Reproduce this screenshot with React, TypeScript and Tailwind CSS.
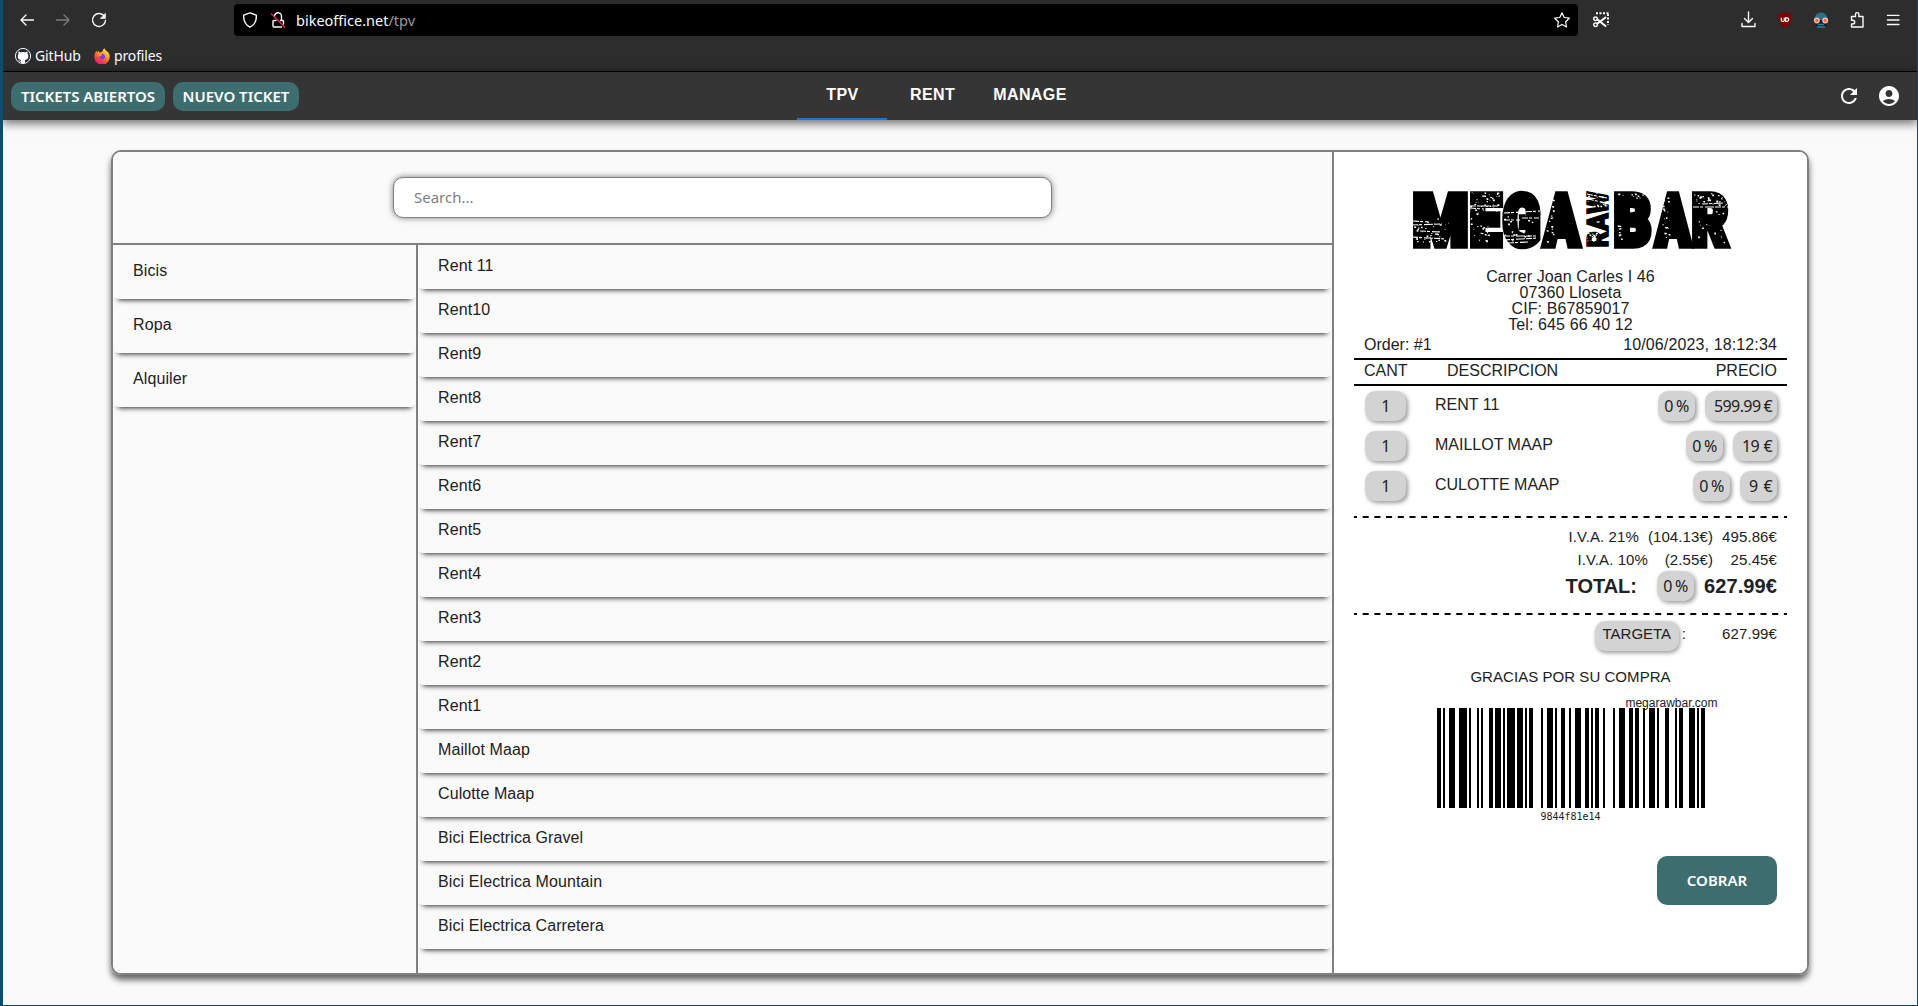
import React from "react";

const letters = [
  { c: "M", x: 0, w: 57 },
  { c: "E", x: 57, w: 33 },
  { c: "G", x: 90, w: 39 },
  { c: "A", x: 131, w: 37 },
  { c: "B", x: 201, w: 39 },
  { c: "A", x: 243, w: 36 },
  { c: "R", x: 279, w: 38 },
];

const scratches =
  "M1 30l16 1M0 34l30-1M8 40l20 1M0 46l34 2M58 15h29M58 17l14 1M92 22l36-2M92 29h16M110 27h17M92 45l34 0M92 49l34-2M96 52l20-1M175 3l20 4M176 8l18 4M281 16l36 0M290 13l22-1M174 40h9";

// Worn areas of the stamp: x, y, width, height, speck count
const worn = [
  [0, 26, 36, 26, 36],
  [57, 1, 31, 18, 40],
  [57, 20, 20, 30, 24],
  [92, 24, 34, 28, 18],
  [134, 6, 7, 48, 24],
  [175, 1, 21, 16, 18],
  [174, 38, 12, 18, 16],
  [205, 2, 26, 5, 9],
  [204, 34, 5, 16, 8],
  [250, 6, 7, 48, 24],
  [282, 2, 33, 12, 28],
  [284, 20, 32, 34, 16],
];

function specks() {
  let seed = 7;
  const rnd = () => (seed = (seed * 16807) % 2147483647) / 2147483647;
  let d = "";
  for (const [x, y, w, h, n] of worn) {
    for (let i = 0; i < n; i++) {
      const s = 0.6 + rnd() * 1.1;
      d += `M${(x + rnd() * w).toFixed(1)} ${(y + rnd() * h).toFixed(1)}h${(s * 1.3).toFixed(1)}v${s.toFixed(1)}h-${s.toFixed(1)}z`;
    }
  }
  return d;
}

function Logo() {
  return (
    <svg width="317" height="57" viewBox="0 0 317 57" className="block overflow-visible">
      <g fontFamily="Roboto" fontWeight="900" fontSize="70" fill="#000" stroke="#000" strokeWidth="7.500" strokeLinejoin="miter" strokeMiterlimit="2">
        {letters.map((l, i) => (
          <text key={i} x={l.x + 1} y="53.500" textLength={l.w - 2} lengthAdjust="spacingAndGlyphs">{l.c}</text>
        ))}
        <text transform="translate(196 56.500) rotate(-90)" fontSize="30" strokeWidth="1.500" textLength="56" lengthAdjust="spacingAndGlyphs">RAW</text>
      </g>
      <path d={scratches} stroke="#fff" strokeWidth="1.100" strokeDasharray="6 1 3 2 9 1" fill="none" />
      <path d={specks()} fill="#fff" />
    </svg>
  );
}

const symbols = ["211232", "411311", "132131", "114131", "112412", "311222", "123221", "112214", "123221", "221231", "132311", "2331112"];

function Barcode() {
  return (
    <div className="flex h-[100px] w-[268px]">
      {symbols.join("").split("").map((n, i) => (
        <div key={i} className={i % 2 === 0 ? "shrink-0 bg-black" : "shrink-0"} style={{ width: Number(n) * 2 }} />
      ))}
    </div>
  );
}

const line = { fill: "none", stroke: "currentColor", strokeWidth: 1.4, strokeLinecap: "round", strokeLinejoin: "round" } as const;

function Icon({ children, className = "" }: { children: React.ReactNode; className?: string }) {
  return <svg width="16" height="16" viewBox="0 0 16 16" className={"block shrink-0 overflow-visible " + className} {...line}>{children}</svg>;
}

function Chrome() {
  return (
    <div className="h-[72px] border-b border-black bg-[#2d2d2d] font-['Noto_Sans'] text-[#fbfbfe]">
      <div className="flex h-10 items-center pl-4 pr-4">
        <Icon><path d="M14.5 8H2M7 3L2 8l5 5" /></Icon>
        <Icon className="ml-5 text-[#7b7b7b]"><path d="M1.500 8H14M9 3l5 5-5 5" /></Icon>
        <Icon className="ml-5"><path d="M13.600 4.600A6.500 6.500 0 1 0 14.500 8.500" /><path d="M14.500 1.500v5h-5z" fill="currentColor" strokeWidth="0.600" /></Icon>
        <div className="ml-[127px] flex h-8 w-[1344px] items-center rounded bg-black pl-2 pr-2">
          <Icon><path d="M8 .8L14.300 3.200C14.700 9 12.300 13 8 15.200C3.700 13 1.300 9 1.700 3.200z" /></Icon>
          <Icon className="ml-3"><path d="M6 8.500H4a1 1 0 0 0-1 1V14a1 1 0 0 0 1 1h7.500M10.500 8.500h2a1 1 0 0 1 1 1V12" /><path d="M4.500 4A3.500 3.500 0 0 1 11.500 4.500V8" /><path d="M1.500 2L14.500 15" stroke="#e22850" /></Icon>
          <span className="ml-[10px] text-[14.500px] leading-5">bikeoffice.net<span className="text-[#9a9a9d]">/tpv</span></span>
          <Icon className="ml-auto"><path d="M8 .8l2.200 4.700 5.100.7-3.700 3.600.9 5.100L8 12.400l-4.500 2.500.9-5.100L.7 6.200l5.100-.7z" strokeWidth="1.200" /></Icon>
        </div>
        <Icon className="ml-[15px]">
          <path d="M3 1.200H16M15 2V13" strokeWidth="2" strokeDasharray="2 1.500" strokeLinecap="butt" />
          <path d="M4.500 7.500L12.500 14M4.500 11.500L12.500 5.500" strokeWidth="2" />
          <circle cx="2.500" cy="6.800" r="1.800" /><circle cx="2.500" cy="12.800" r="1.800" />
        </Icon>
        <Icon className="ml-auto"><path d="M8.500 0v10M4.500 6.500l4 4 4-4M2 11.500v3h13v-3" /></Icon>
        <svg width="16" height="16" viewBox="0 0 16 16" className="ml-[21px] block">
          <path d="M8 0C10 1.500 13 2 15 2C15 9 13 13 8 16C3 13 1 9 1 2C3 2 6 1.500 8 0z" fill="#800000" />
          <path d="M4.300 5.800v2.200a1.400 1.400 0 0 0 3 0V5.800M8.600 5.800v3.600h1.300a1.800 1.800 0 0 0 0-3.600z" fill="none" stroke="#fff" strokeWidth="1.200" />
        </svg>
        <svg width="16" height="16" viewBox="0 0 16 16" className="ml-5 block">
          <path d="M1.500 8C1.500 2.500 5 .5 8 .5S14.500 2.500 14.500 8z" fill="#2f6f86" />
          <path d="M2.500 8h11v6.500h-11z" fill="#10222c" />
          <path d="M5 12.500h6M4 15h8" stroke="#2f7d9c" strokeWidth="1.300" />
          <circle cx="3.800" cy="8.500" r="2.300" fill="#f4684f" stroke="#f3c3b0" strokeWidth="1.300" />
          <circle cx="12.200" cy="8.500" r="2.300" fill="#f4684f" stroke="#f3c3b0" strokeWidth="1.300" />
        </svg>
        <Icon className="ml-5"><path d="M2.500 7.500V4.500h4V2.300a1.700 1.700 0 0 1 3.400 0V4.500h4.100V15H2.500V12h1.300a1.900 1.900 0 0 0 0-3.800H2.500z" /></Icon>
        <Icon className="ml-5"><path d="M2.500 3.400h11.500M2.500 8h11.500M2.500 12.500h11.500" /></Icon>
      </div>
      <div className="flex h-8 items-center pb-px pl-3 text-[14px] leading-5 tracking-[-0.150px]">
        <svg width="16" height="16" viewBox="0 0 16 16" className="block">
          <circle cx="8" cy="8" r="7.600" fill="#24292f" stroke="#f5f5f5" strokeWidth="1" />
          <path d="M6 15v-3c-2.500-.3-3.500-1.800-3.300-4.300 0-.8.300-1.500.8-2-.2-.7-.2-1.500.1-2.200.8 0 1.500.4 2.200.9 1.400-.4 3-.4 4.400 0 .7-.5 1.400-.9 2.200-.9.300.7.3 1.500.1 2.200.5.500.8 1.200.8 2 .2 2.500-.8 4-3.300 4.300v3z" fill="#fff" />
          <path d="M5.800 13.300c-1.400.3-1.600-.8-2.300-1.300" stroke="#fff" fill="none" />
        </svg>
        <span className="ml-1 w-[46px]">GitHub</span>
        <svg width="16" height="16" viewBox="0 0 16 16" className="ml-[13px] block">
          <defs>
            <linearGradient id="ff" x1="0.800" y1="0" x2="0.200" y2="1">
              <stop offset="0" stopColor="#fff44f" /><stop offset="0.350" stopColor="#ffa624" /><stop offset="0.650" stopColor="#ff4a41" /><stop offset="1" stopColor="#e31587" />
            </linearGradient>
          </defs>
          <path d="M10.300 0c.5 1.500 1.600 2.500 3 3.600 1.700 1.500 2.600 3.300 2.400 5.600A7.700 7.700 0 0 1 .3 9C.2 6.500 1 4.500 2.500 2.800l.6 1.600 1.400-1.600L5.500 4.400 8.500 3.600C8.700 2.200 9.300 1 10.300 0z" fill="url(#ff)" />
          <path d="M5 6.500l3.500-.7c2 .4 3 2 2.600 3.800-.5 1.800-3 2.300-4.600 1.200-1.400-.8-1.800-2-1.500-4.300z" fill="#7542e5" />
          <path d="M3 5.500l4 .3 1 1.500-2.800 1.500z" fill="#ff9a1f" />
        </svg>
        <span className="ml-1">profiles</span>
      </div>
    </div>
  );
}

function Header() {
  return (
    <header className="relative z-10 grid h-12 grid-cols-[794px_auto_1fr] bg-[#353535] text-white shadow-[0_2px_10px_1px_rgba(0,0,0,0.6)]">
      <div className="flex items-center gap-2 pl-2 font-['Noto_Sans'] text-[15px] font-semibold">
        <button className="h-[29px] w-[154px] rounded-[10px] bg-[#3e6d70]">TICKETS ABIERTOS</button>
        <button className="h-[29px] w-[126px] rounded-[10px] bg-[#3e6d70]">NUEVO TICKET</button>
      </div>
      <nav className="flex text-base font-bold leading-[46px] tracking-[0.4px]">
        <div className="w-[90px] border-b-2 border-[#1976d2] pl-px text-center">TPV</div>
        <div className="w-[90px] pl-px text-center">RENT</div>
        <div className="w-[105px] pl-px text-center">MANAGE</div>
      </nav>
      <div className="flex items-center justify-end gap-4 pr-4">
        <svg width="24" height="24" viewBox="0 0 24 24" fill="currentColor"><path d="M17.650 6.350C16.200 4.900 14.210 4 12 4c-4.420 0-7.990 3.580-7.990 8s3.570 8 7.990 8c3.730 0 6.840-2.550 7.730-6h-2.080c-.82 2.330-3.040 4-5.650 4-3.310 0-6-2.690-6-6s2.690-6 6-6c1.660 0 3.140.69 4.220 1.780L13 11h7V4l-2.350 2.350z" /></svg>
        <svg width="24" height="24" viewBox="0 0 24 24" fill="currentColor"><path d="M12 2C6.480 2 2 6.480 2 12s4.480 10 10 10 10-4.480 10-10S17.520 2 12 2zm0 4c1.930 0 3.500 1.570 3.500 3.500S13.930 13 12 13s-3.500-1.570-3.500-3.500S10.070 6 12 6zm0 14c-2.030 0-4.430-.82-6.140-2.880C7.550 15.800 9.680 15 12 15s4.450.8 6.140 2.120C16.430 19.180 14.030 20 12 20z" /></svg>
      </div>
    </header>
  );
}

const categories = ["Bicis", "Ropa", "Alquiler"];
const products = ["Rent 11", "Rent10", "Rent9", "Rent8", "Rent7", "Rent6", "Rent5", "Rent4", "Rent3", "Rent2", "Rent1", "Maillot Maap", "Culotte Maap", "Bici Electrica Gravel", "Bici Electrica Mountain", "Bici Electrica Carretera"];
const items = [
  { name: "RENT 11", price: "599.99", width: "w-[72px]" },
  { name: "MAILLOT MAAP", price: "19", width: "w-11" },
  { name: "CULOTTE MAAP", price: "9", width: "w-[37px]" },
];

function Pill({ children, className }: { children: React.ReactNode; className: string }) {
  return <div className={"flex h-[30px] items-center rounded-[10px] bg-[#d3d3d3] font-['Noto_Sans'] text-base tracking-[-0.600px] shadow-[2px_2px_4px_rgba(0,0,0,0.4)] " + className}>{children}</div>;
}

function Percent() {
  return <Pill className="w-[37px] justify-center gap-[3px]"><span>0</span><span>%</span></Pill>;
}

function Dashes() {
  return (
    <svg width="433" height="2" className="block">
      <path d="M0 1H433" stroke="#000" strokeWidth="2" strokeDasharray="6 5.700" strokeDashoffset="3" />
    </svg>
  );
}

function Ticket() {
  return (
    <aside className="flex w-[475px] shrink-0 flex-col items-center border-l-2 border-[#808080] bg-white pt-[39px]">
      <Logo />
      <div className="mt-[21px] text-center text-base leading-4 tracking-[0.100px]">
        <p>Carrer Joan Carles I 46</p>
        <p>07360 Lloseta</p>
        <p>CIF: B67859017</p>
        <p>Tel: 645 66 40 12</p>
      </div>
      <div className="mt-[3px] flex h-[22px] w-[433px] justify-between px-[10px] text-base leading-[18px]"><span>Order: #1</span><span className="tracking-[0.130px]">10/06/2023, 18:12:34</span></div>
      <div className="flex h-7 w-[433px] border-y-2 border-black px-[10px] text-base leading-[22px]">
        <span className="w-[83px]">CANT</span><span>DESCRIPCION</span><span className="ml-auto">PRECIO</span>
      </div>
      <div className="flex w-[433px] flex-col gap-[10px] px-[10px] pt-[5px]">
        {items.map((it) => (
          <div key={it.name} className="flex h-[30px]">
            <Pill className="ml-px w-[41px] justify-center">1</Pill>
            <span className="ml-[29px] text-base leading-[28px]">{it.name}</span>
            <div className="ml-auto flex gap-[10px]">
              <Percent />
              <Pill className={it.width + " justify-between pl-[9px] pr-[5px]"}><span>{it.price}</span><span>€</span></Pill>
            </div>
          </div>
        ))}
      </div>
      <div className="mt-[15px]"><Dashes /></div>
      <div className="mt-[7px] flex w-[413px] justify-end text-[15px] leading-[23px] tracking-[0.100px]">
        <span className="mr-[9px]">I.V.A. 21%</span><span>(104.13€)</span><span className="w-16 text-right">495.86€</span>
      </div>
      <div className="flex w-[413px] justify-end text-[15px] leading-[23px] tracking-[0.100px]">
        <span>I.V.A. 10%</span><span className="w-[65px] text-right">(2.55€)</span><span className="w-16 text-right">25.45€</span>
      </div>
      <div className="flex h-[30px] w-[413px] items-center justify-end text-xl font-bold">
        <span className="mr-5">TOTAL:</span>
        <div className="font-normal"><Percent /></div>
        <span className="ml-[10px] tracking-[0.100px]">627.99€</span>
      </div>
      <div className="mt-3"><Dashes /></div>
      <div className="mt-[6px] flex h-[31px] w-[413px] justify-end text-[15px] leading-[26px]">
        <span className="h-[30px] w-[84px] rounded-[10px] bg-[#d3d3d3] text-center shadow-[1px_2px_4px_rgba(0,0,0,0.4)]">TARGETA</span>
        <span className="ml-[3px]">:</span>
        <span className="w-[91px] text-right tracking-[0.100px]">627.99€</span>
      </div>
      <p className="mt-[14px] h-[22px] text-[15px] leading-[22px] tracking-[0.050px]">GRACIAS POR SU COMPRA</p>
      <p className="mt-[10px] h-[10px] w-[294px] text-right text-xs leading-[10px]">megarawbar.com</p>
      <Barcode />
      <p className="h-4 font-['DejaVu_Sans_Mono'] text-[10px] leading-[18px]">9844f81e14</p>
      <button className="ml-[293px] mt-8 h-[49px] w-[120px] rounded-[10px] bg-[#3e6d70] font-['Noto_Sans'] text-[15px] font-semibold text-white">COBRAR</button>
    </aside>
  );
}

export default function App() {
  return (
    <div className="flex h-[1006px] w-[1918px] flex-col overflow-hidden border-b border-l-[3px] border-r border-[#04516f] bg-[#fafafa] font-['Liberation_Sans',sans-serif] text-[#212121]">
      <Chrome />
      <Header />
      <main className="flex grow px-[108px] pt-[30px]">
        <div className="flex h-[825px] w-[1698px] overflow-hidden rounded-[10px] border-2 border-[#808080] shadow-[0_5px_6px_0_rgba(0,0,0,0.6)]">
          <section className="flex grow flex-col bg-[#fafafa]">
            <div className="flex h-[93px] shrink-0 justify-center border-b-2 border-[#808080] pt-[25px]">
              <input placeholder="Search..." className="h-[41px] w-[659px] rounded-[10px] border border-[#808080] bg-white pb-[2px] pl-5 font-['Noto_Sans'] text-[15px] shadow-[0_0_6px_rgba(0,0,0,0.5)] outline-none placeholder:text-[#808080]" />
            </div>
            <div className="flex grow tracking-[0.100px]">
              <div className="w-[305px] border-r-2 border-[#808080]">
                {categories.map((c) => (
                  <div key={c} className="h-[54px] rounded-[5px] pl-5 leading-[52px] shadow-[0_6px_5px_-5px_rgba(0,0,0,0.85)]">{c}</div>
                ))}
              </div>
              <div className="grow">
                {products.map((p) => (
                  <div key={p} className="h-11 rounded-[5px] pl-5 leading-[42px] shadow-[0_6px_5px_-5px_rgba(0,0,0,0.85)]">{p}</div>
                ))}
              </div>
            </div>
          </section>
          <Ticket />
        </div>
      </main>
    </div>
  );
}
